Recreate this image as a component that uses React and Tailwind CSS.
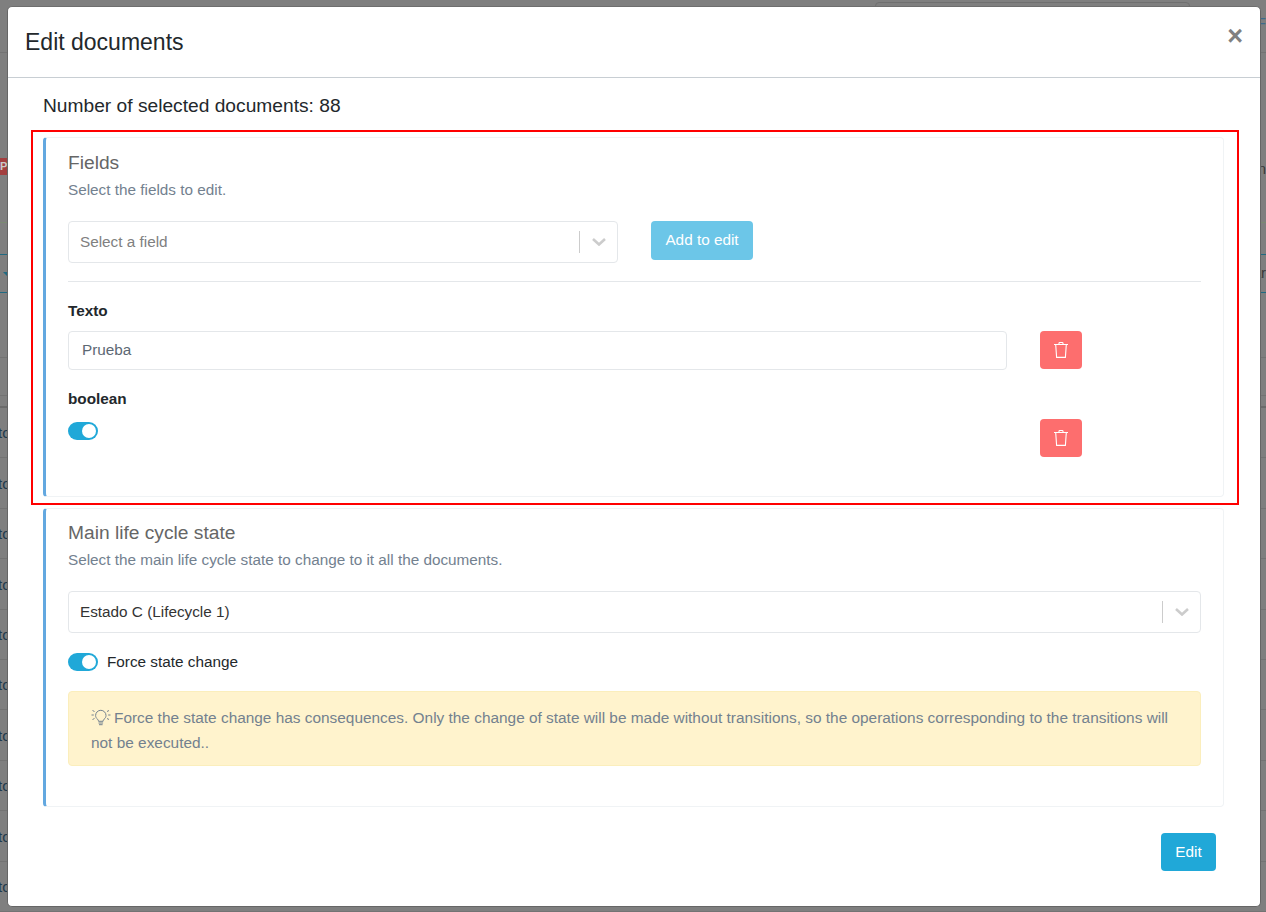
import React from 'react';

function Chevron() {
  return (
    <svg width="14" height="8" viewBox="0 0 14 8" fill="none" className="ml-[12px] mr-[11px]">
      <path d="M1 1l6 5.500L13 1" stroke="#cccccc" strokeWidth="2.600" />
    </svg>
  );
}

function SelectBox({ className, value, placeholder }) {
  return (
    <div className={`flex h-[42px] items-center rounded border border-[#e4e7ea] bg-white pl-[11px] ${className}`}>
      <span className={`flex-1 text-[15.3px] ${placeholder ? 'text-[#808080]' : 'text-[#333333]'}`}>{value}</span>
      <span className="h-[22px] w-px bg-[#cccccc]"></span>
      <Chevron />
    </div>
  );
}

function Toggle() {
  return (
    <span className="flex h-[18px] w-[30px] items-center justify-end rounded-full bg-[#20a8d8] pr-[2px]">
      <span className="h-[14px] w-[14px] rounded-full bg-white"></span>
    </span>
  );
}

function TrashButton() {
  return (
    <button className="flex h-[38px] w-[42px] items-center justify-center rounded bg-[#fd6e6e]">
      <svg width="16" height="18" viewBox="0 0 16 18" fill="none" stroke="#ffffff" strokeWidth="1.100">
        <path d="M1 3.500h14M2.700 3.500l.9 12.900h8.800l.9-12.900M6 3.500V2.300a.8.8 0 0 1 .8-.8h2.400a.8.8 0 0 1 .8.8v1.200" />
      </svg>
    </button>
  );
}

function Bulb() {
  return (
    <svg width="20" height="18" viewBox="0 0 20 18" fill="none" stroke="#73818f" strokeWidth="1" className="mr-[3px] inline-block align-[-3px]">
      <path d="M6.500 11.200C5.300 10.200 4.600 9 4.600 7.500a5.200 5.200 0 0 1 10.400 0c0 1.500-.7 2.700-1.900 3.700-.7.6-1 1.200-1 2.100H7.500c0-.9-.3-1.500-1-2.100z" />
      <path d="M7.500 15h4.600M8 16.700h3.600M1.500 2.500l2 1M18 2.500l-2 1M.5 7h2.300M19.500 7h-2.300M1.500 11.500l2-1M18 11.500l-2-1" />
    </svg>
  );
}

function BackgroundRow({ height, line, left, right }) {
  return (
    <div className={`flex items-center justify-between border-b pt-[2px] text-[15px] text-[#1e3a4d] ${line}`} style={{ height }}>
      <span className="ml-[-2px]">{left}</span>
      <span>{right}</span>
    </div>
  );
}

// what shows of the document table behind the modal
function Background() {
  return (
    <div className="h-[912px] overflow-hidden bg-[#7f7f7f]">
      <div className="flex h-[53px] justify-between border-b border-[#737373]">
        <div className="ml-[875px] mt-[2px] h-[20px] w-[315px] rounded border border-[#6f6f6f]"></div>
        <span className="mt-[12px] text-[15px] text-[#3d6a8c]">F</span>
      </div>
      <div className="h-[105px]"></div>
      <div className="flex h-[17px] w-2 items-center bg-[#a33f3f] text-[11px] font-bold text-[#c9c9c9]">P</div>
      <div className="flex h-[48px] justify-end border-b border-[#7a8a72] text-[15px] text-[#3a3a3a]">
        <span className="mt-[-17px]">n</span>
      </div>
      <div className="h-[31px]"></div>
      <div className="flex h-[39px] items-center justify-between border-y border-[#1f6a82] text-[15px] text-[#3a3a3a]">
        <span className="ml-[3px] h-0 w-0 border-x-[4px] border-t-[4px] border-x-transparent border-t-[#1f6a82]"></span>
        <span>ar</span>
      </div>
      <div className="h-[65px] border-b border-[#737373]"></div>
      <div className="h-[38px] border-b border-[#737373]"></div>
      <div className="h-[12px] border-b-2 border-[#6b6b6b]"></div>
      {[432, 484, 533, 585, 635, 685, 736, 786, 836, 886].map((y) => (
        <BackgroundRow key={y} height={50.4} line="border-[#737373]" left="to" />
      ))}
    </div>
  );
}

export default function App() {
  return (
    <div className="relative h-[912px] overflow-hidden font-['Liberation_Sans',Arial,sans-serif]">
      <Background />

      <div className="absolute left-[7px] top-[6px] h-[901px] w-[1254px] rounded-[5px] border border-[#666666] border-t-[#6e6e6e] bg-white">
        {/* Header */}
        <div className="flex h-[71px] justify-between border-b border-[#c8ced3] pl-[17px] pr-[17px]">
          <h1 className="mt-[18px] text-[23px] leading-[34px] text-[#23282c]">Edit documents</h1>
          <span className="mt-[12px] text-[27px] font-bold leading-[34px] text-[#808080]">×</span>
        </div>

        {/* Body */}
        <div className="pl-[23px]">
          <p className="ml-[12px] mt-[15px] h-[37px] text-[19.200px] leading-[26px] text-[#23282c]">Number of selected documents: 88</p>

          <div className="w-[1208px] border-2 border-[#ff0000] pb-[6px] pl-[10px] pr-[13px] pt-[5px]">
            <section className="h-[360px] rounded border border-l-[3px] border-[#f0f3f5] border-l-[#63a8e0] pl-[22px] pr-[22px] pt-[12px]">
              <h2 className="text-[19.200px] leading-[26px] text-[#666666]">Fields</h2>
              <p className="mt-[3px] text-[15.300px] leading-[22px] text-[#73818f]">Select the fields to edit.</p>

              <div className="mt-[20px] flex items-start gap-[33px]">
                <SelectBox className="w-[550px]" value="Select a field" placeholder />
                <button className="h-[39px] w-[102px] rounded bg-[#6cc6e8] text-[15.300px] text-white">Add to edit</button>
              </div>

              <div className="mt-[18px] border-t border-[#e4e7ea]"></div>

              <label className="mt-[19px] block text-[15.300px] font-bold leading-[20px] text-[#23282c]">Texto</label>
              <div className="mt-[10px] flex items-start gap-[33px]">
                <div className="flex h-[39px] w-[939px] items-center rounded border border-[#e4e7ea] px-[13px] text-[15.300px] text-[#5c6873]">Prueba</div>
                <TrashButton />
              </div>

              <label className="mt-[19px] block text-[15.300px] font-bold leading-[20px] text-[#23282c]">boolean</label>
              <div className="mt-[10px] flex items-start gap-[942px]">
                <div className="mt-[3px]"><Toggle /></div>
                <TrashButton />
              </div>
            </section>
          </div>

          <section className="ml-[12px] mt-[3px] h-[299px] w-[1181px] rounded border border-l-[3px] border-[#f0f3f5] border-l-[#63a8e0] pl-[22px] pr-[22px] pt-[11px]">
            <h2 className="text-[19.200px] leading-[26px] text-[#666666]">Main life cycle state</h2>
            <p className="mt-[3px] text-[15.300px] leading-[22px] text-[#73818f]">Select the main life cycle state to change to it all the documents.</p>

            <SelectBox className="mt-[20px]" value="Estado C (Lifecycle 1)" />

            <div className="mt-[18px] flex items-center gap-[9px]">
              <Toggle />
              <span className="text-[15.300px] text-[#23282c]">Force state change</span>
            </div>

            <div className="mt-[17px] h-[75px] rounded border border-[#fbeebc] bg-[#fff3cd] px-[22px] pt-[13px] text-[15.400px] leading-[25px] text-[#73818f]">
              <Bulb />Force the state change has consequences. Only the change of state will be made without transitions, so the operations corresponding to the transitions will not be executed..
            </div>
          </section>

          <div className="mr-[44px] mt-[26px] flex justify-end">
            <button className="h-[38px] w-[55px] rounded bg-[#20a8d8] text-[15.300px] text-white">Edit</button>
          </div>
        </div>
      </div>
    </div>
  );
}
